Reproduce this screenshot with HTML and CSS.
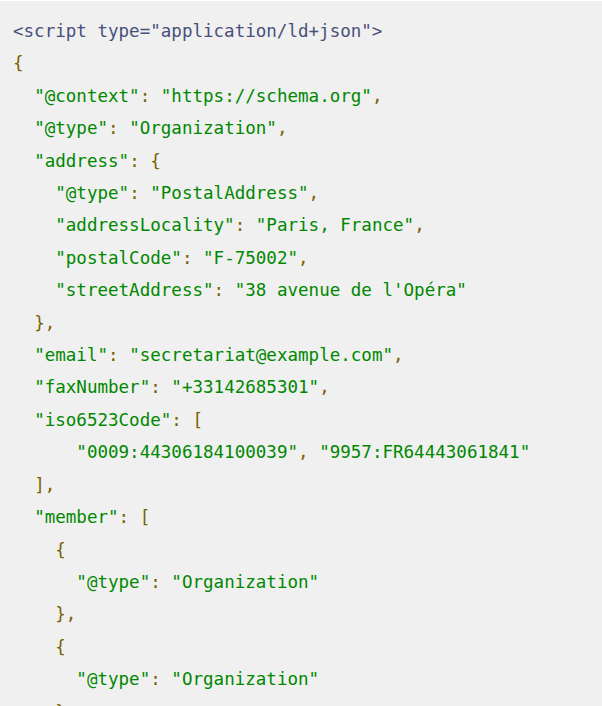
FILE: index.html
```html
<!DOCTYPE html>
<html lang="en">
<head>
<meta charset="utf-8">
<title>JSON-LD</title>
<link rel="stylesheet" href="styles.css">
</head>
<body>
<pre class="code"><code><span class="tag">&lt;script type="application/ld+json"&gt;</span>
<span class="p">{</span>
  <span class="s">"@context"</span><span class="p">:</span> <span class="s">"https://schema.org"</span><span class="p">,</span>
  <span class="s">"@type"</span><span class="p">:</span> <span class="s">"Organization"</span><span class="p">,</span>
  <span class="s">"address"</span><span class="p">:</span> <span class="p">{</span>
    <span class="s">"@type"</span><span class="p">:</span> <span class="s">"PostalAddress"</span><span class="p">,</span>
    <span class="s">"addressLocality"</span><span class="p">:</span> <span class="s">"Paris, France"</span><span class="p">,</span>
    <span class="s">"postalCode"</span><span class="p">:</span> <span class="s">"F-75002"</span><span class="p">,</span>
    <span class="s">"streetAddress"</span><span class="p">:</span> <span class="s">"38 avenue de l'Opéra"</span>
  <span class="p">},</span>
  <span class="s">"email"</span><span class="p">:</span> <span class="s">"secretariat@example.com"</span><span class="p">,</span>
  <span class="s">"faxNumber"</span><span class="p">:</span> <span class="s">"+33142685301"</span><span class="p">,</span>
  <span class="s">"iso6523Code"</span><span class="p">:</span> <span class="p">[</span>
      <span class="s">"0009:44306184100039"</span><span class="p">,</span> <span class="s">"9957:FR64443061841"</span>
  <span class="p">],</span>
  <span class="s">"member"</span><span class="p">:</span> <span class="p">[</span>
    <span class="p">{</span>
      <span class="s">"@type"</span><span class="p">:</span> <span class="s">"Organization"</span>
    <span class="p">},</span>
    <span class="p">{</span>
      <span class="s">"@type"</span><span class="p">:</span> <span class="s">"Organization"</span>
    <span class="p">}</span></code></pre>
</body>
</html>
```

FILE: styles.css
```css
html, body {
  margin: 0;
  padding: 0;
  background: #ffffff;
}

.code {
  margin: 1px 0 0 0;
  padding: 14px 13px 14px 13px;
  background: #f0f0f0;
  font-family: "DejaVu Sans Mono", "Liberation Mono", monospace;
  font-size: 17.55px;
  line-height: 32.4px;
  color: #48507a;
  white-space: pre;
  overflow: hidden;
}

.code code {
  font-family: inherit;
}

.tag {
  color: #48507a;
}

.p {
  color: #7a6200;
}

.s {
  color: #008800;
}
```
